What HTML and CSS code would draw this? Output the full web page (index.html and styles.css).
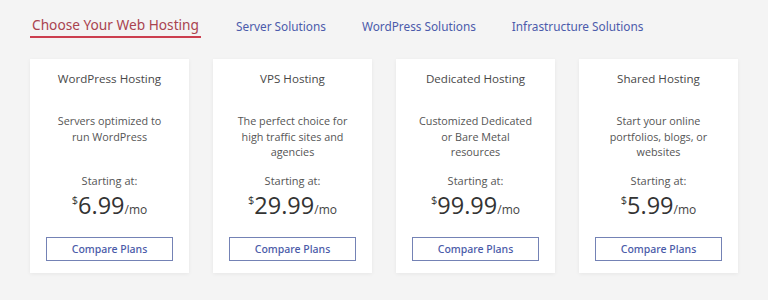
FILE: index.html
```html
<!DOCTYPE html>
<html>
<head>
<meta charset="utf-8">
<link rel="stylesheet" href="styles.css">
</head>
<body>
<nav class="tabs">
  <a class="tab active">Choose Your Web Hosting</a>
  <a class="tab">Server Solutions</a>
  <a class="tab">WordPress Solutions</a>
  <a class="tab">Infrastructure Solutions</a>
</nav>
<section class="cards">
  <div class="card">
    <h3 class="title">WordPress Hosting</h3>
    <p class="desc">Servers optimized to<br>run WordPress</p>
    <p class="start">Starting at:</p>
    <p class="price"><span class="cur">$</span>6.99<span class="per">/mo</span></p>
    <a class="btn">Compare Plans</a>
  </div>
  <div class="card">
    <h3 class="title">VPS Hosting</h3>
    <p class="desc">The perfect choice for<br>high traffic sites and<br>agencies</p>
    <p class="start">Starting at:</p>
    <p class="price"><span class="cur">$</span>29.99<span class="per">/mo</span></p>
    <a class="btn">Compare Plans</a>
  </div>
  <div class="card">
    <h3 class="title">Dedicated Hosting</h3>
    <p class="desc">Customized Dedicated<br>or Bare Metal<br>resources</p>
    <p class="start">Starting at:</p>
    <p class="price"><span class="cur">$</span>99.99<span class="per">/mo</span></p>
    <a class="btn">Compare Plans</a>
  </div>
  <div class="card">
    <h3 class="title">Shared Hosting</h3>
    <p class="desc">Start your online<br>portfolios, blogs, or<br>websites</p>
    <p class="start">Starting at:</p>
    <p class="price"><span class="cur">$</span>5.99<span class="per">/mo</span></p>
    <a class="btn">Compare Plans</a>
  </div>
</section>
</body>
</html>
```
FILE: styles.css
```css
* { box-sizing: border-box; }
body {
  margin: 0;
  background: #f4f4f4;
  font-family: "Open Sans", "Noto Sans", sans-serif;
  width: 768px;
  height: 300px;
  overflow: hidden;
}
.tabs {
  display: flex;
  gap: 0;
  padding: 15px 0 0 30px;
  height: 59px;
  align-items: flex-start;
}
.tab {
  font-family: "Noto Sans", sans-serif;
  font-size: 11.8px;
  line-height: 20px;
  height: 23px;
  color: #4b5bab;
  padding: 1px 0 0;
  margin-right: 36px;
  border-bottom: 2px solid transparent;
}
.tab.active {
  font-size: 13.7px;
  color: #a9434f;
  padding: 0 2px;
  margin-right: 35px;
  border-bottom-color: #cc3f4f;
}
.cards {
  display: grid;
  grid-template-columns: repeat(4, 159px);
  gap: 24px;
  padding-left: 30px;
}
.card {
  background: #fff;
  height: 214px;
  padding: 12px 16px 13px;
  display: flex;
  flex-direction: column;
  align-items: center;
  text-align: center;
  box-shadow: 0 1px 4px rgba(0,0,0,0.06);
}
.title {
  margin: 0;
  font-size: 11.6px;
  font-weight: 400;
  line-height: 16px;
  color: #484848;
}
.desc {
  margin: 26px 0 0;
  font-size: 10.8px;
  line-height: 15.5px;
  color: #555;
  min-height: 47px;
}
.start {
  margin: 13px 0 0;
  font-size: 11px;
  line-height: 16px;
  color: #555;
}
.price {
  margin: 2px 0 0;
  height: 28px;
  font-size: 23.5px;
  line-height: 28px;
  color: #333;
}
.cur {
  font-size: 11px;
  line-height: 0;
  vertical-align: 10px;
}
.per {
  font-size: 12px;
  color: #444;
}
.btn {
  margin-top: 18px;
  width: 127px;
  height: 24px;
  border: 1px solid #7482b5;
  font-family: "Noto Sans", sans-serif;
  font-size: 10.5px;
  font-weight: 500;
  line-height: 22px;
  color: #4a5aa8;
}
```
